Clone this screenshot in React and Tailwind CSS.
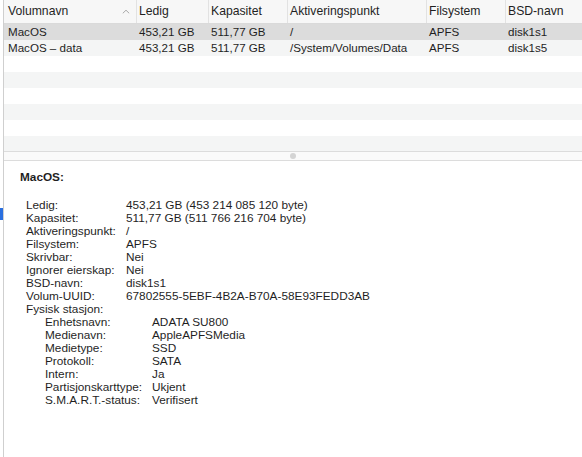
const columns = [
  { name: 'Volumnavn', w: 'w-[132px]', sort: true },
  { name: 'Ledig', w: 'w-[72px]' },
  { name: 'Kapasitet', w: 'w-[79px]' },
  { name: 'Aktiveringspunkt', w: 'w-[139px]' },
  { name: 'Filsystem', w: 'w-[79px]' },
  { name: 'BSD-navn', w: 'flex-1' },
]

const volumes = [
  ['MacOS', '453,21 GB', '511,77 GB', '/', 'APFS', 'disk1s1'],
  ['MacOS – data', '453,21 GB', '511,77 GB', '/System/Volumes/Data', 'APFS', 'disk1s5'],
]

const details = [
  ['Ledig:', '453,21 GB (453 214 085 120 byte)'],
  ['Kapasitet:', '511,77 GB (511 766 216 704 byte)'],
  ['Aktiveringspunkt:', '/'],
  ['Filsystem:', 'APFS'],
  ['Skrivbar:', 'Nei'],
  ['Ignorer eierskap:', 'Nei'],
  ['BSD-navn:', 'disk1s1'],
  ['Volum-UUID:', '67802555-5EBF-4B2A-B70A-58E93FEDD3AB'],
]

const drive = [
  ['Enhetsnavn:', 'ADATA SU800'],
  ['Medienavn:', 'AppleAPFSMedia'],
  ['Medietype:', 'SSD'],
  ['Protokoll:', 'SATA'],
  ['Intern:', 'Ja'],
  ['Partisjonskarttype:', 'Ukjent'],
  ['S.M.A.R.T.-status:', 'Verifisert'],
]

export default function App() {
  return (
    <div className="flex h-[457px] w-[582px] overflow-hidden bg-white text-[11.6px] text-[#1f1f1f]" style={{ fontFamily: '"Liberation Sans", Arial, sans-serif' }}>
      {/* left gutter with selection marker */}
      <div className="w-[3px] shrink-0 pt-[208px]">
        <div className="h-[12px] w-[3px] bg-[#2a6fdf]" />
      </div>
      <div className="w-px shrink-0 bg-[#cfcfcf]" />

      <div className="flex min-w-0 flex-1 flex-col">
        {/* table */}
        <div className="h-[151px] overflow-hidden">
          <div className="flex h-[24px] border-b border-[#dadada] bg-[#f7f7f7]">
            {columns.map((c, i) => (
              <div key={c.name} className={`${c.w} flex shrink-0 items-center ${i > 0 ? 'border-l border-[#e2e2e2] pl-[2px]' : 'pl-[4px]'} ${c.sort ? 'justify-between pr-[6px]' : ''}`}>
                <span className="text-[12.2px]">{c.name}</span>
                {c.sort && (
                  <svg width="8" height="5" viewBox="0 0 8 5" className="mb-px">
                    <path d="M0.8 4.3 L4 1.2 L7.2 4.3" fill="none" stroke="#a8a8a8" strokeWidth="1" />
                  </svg>
                )}
              </div>
            ))}
          </div>
          {volumes.map((row, r) => (
            <div key={r} className={`flex h-[16px] items-center ${r === 0 ? 'bg-[#dcdcdc]' : 'bg-[#f4f5f5]'}`}>
              {row.map((cell, i) => (
                <div key={i} className={`${columns[i].w} shrink-0 truncate ${i > 0 ? 'pl-[3px]' : 'pl-[4px]'}`}>{cell}</div>
              ))}
            </div>
          ))}
          {[0, 1, 2, 3, 4, 5].map((i) => (
            <div key={i} className={`h-[16px] ${i % 2 === 1 ? 'bg-[#f4f5f5]' : 'bg-white'}`} />
          ))}
        </div>

        {/* splitter */}
        <div className="flex h-[10px] items-center justify-center border-y border-[#dcdcdc] bg-[#fafafa]">
          <div className="h-[6px] w-[6px] rounded-full bg-[#d4d4d4]" />
        </div>

        {/* detail pane */}
        <div className="flex-1 pl-[16px] pt-[10px] text-[11.8px] leading-[13px]">
          <div className="font-bold">MacOS:</div>
          <div className="mt-[15px] pl-[6px]">
            {details.map(([k, v]) => (
              <div key={k} className="grid grid-cols-[100px_1fr]">
                <span>{k}</span>
                <span>{v}</span>
              </div>
            ))}
            <div>Fysisk stasjon:</div>
            <div className="pl-[19px]">
              {drive.map(([k, v]) => (
                <div key={k} className="grid grid-cols-[107px_1fr]">
                  <span>{k}</span>
                  <span>{v}</span>
                </div>
              ))}
            </div>
          </div>
        </div>
      </div>
    </div>
  )
}
